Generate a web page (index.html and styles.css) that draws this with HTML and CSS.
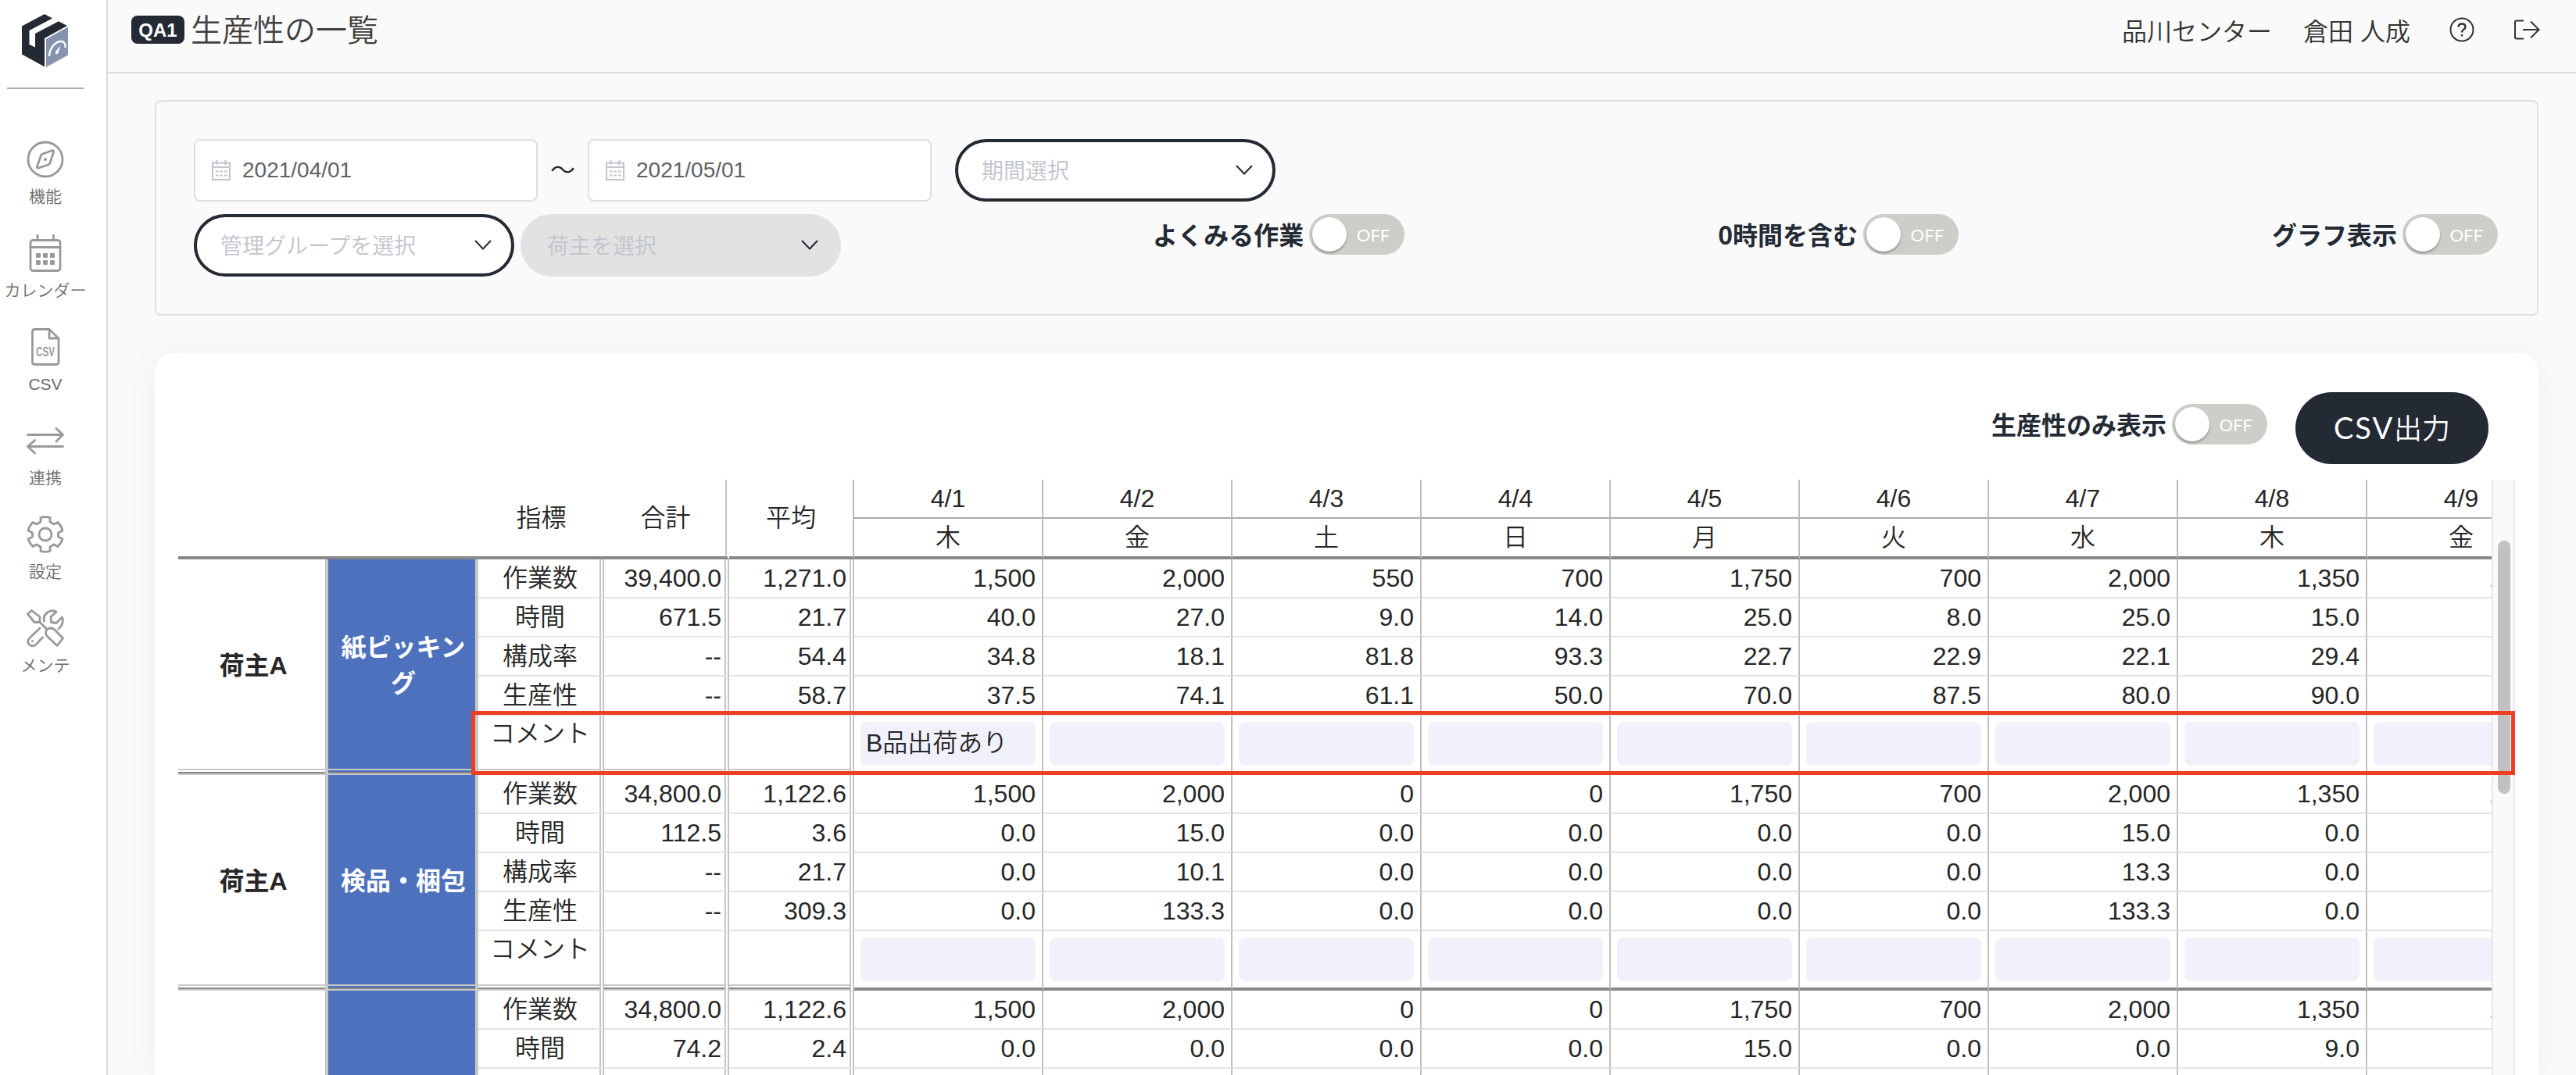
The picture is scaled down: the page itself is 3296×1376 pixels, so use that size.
FILE: index.html
```
<!DOCTYPE html>
<html lang="ja">
<head>
    <meta charset="UTF-8">
    <meta name="viewport" content="width=device-width, initial-scale=1.0">
    <title>生産性の一覧</title>
    <link rel="stylesheet" href="styles.css">
</head>
<body>
    <nav class="sidebar">
        <svg class="logo" viewBox="28 17 62 70">
            <path fill="#232a34" d="M58 18L68 23.5L38.5 39V57L46 60.5V43L76 27.3L87 33L58 49V85.5L29 69.5V33.5Z"/>
            <path fill="#8593ae" d="M60 50L88 34.5V70.5L60 86Z"/>
            <path fill="none" stroke="#fff" stroke-width="2.4" stroke-linecap="round" d="M64 71C65 61 72 53 79 53C83 53 85 56 84.5 60"/>
            <path fill="#fff" d="M78.5 58L75.5 68Q73.5 70.500 72 68.500Q71.500 66.500 73 65Z"/>
        </svg>
        <hr>
        <a class="nav-item">
            <svg viewBox="0 0 48 48"><circle cx="24" cy="24" r="22"/><path d="M32.500 12.800L20.500 17Q18.800 17.600 18.300 19.200L13.500 33Q12.800 35.800 15.500 35L27.500 31Q29.200 30.400 29.800 28.800L34.500 14.800Q35.200 12 32.500 12.800Z"/><circle class="fill" cx="24" cy="24" r="2"/></svg>
            <span>機能</span>
        </a>
        <a class="nav-item">
            <svg viewBox="0 0 48 48"><rect x="5" y="7.500" width="38" height="39" rx="3"/><path d="M5 16.500H43M14 1V7M34.500 1V7"/><g class="fill"><rect x="12" y="24" width="6" height="6" rx="1"/><rect x="21" y="24" width="6" height="6" rx="1"/><rect x="30" y="24" width="6" height="6" rx="1"/><rect x="12" y="33" width="6" height="6" rx="1"/><rect x="21" y="33" width="6" height="6" rx="1"/><rect x="30" y="33" width="6" height="6" rx="1"/></g></svg>
            <span>カレンダー</span>
        </a>
        <a class="nav-item">
            <svg viewBox="0 0 48 48"><path d="M29 1.500H10.500Q7.500 1.500 7.500 4.500V43.500Q7.500 46.500 10.500 46.500H38Q41 46.500 41 43.500V13L29 1.500V13H41"/><text x="12" y="36" textLength="24" lengthAdjust="spacingAndGlyphs">CSV</text></svg>
            <span>CSV</span>
        </a>
        <a class="nav-item">
            <svg viewBox="0 0 48 48"><path d="M1.500 16.500H46.500M38 8.500L46.500 16.500L38 25M46.500 31.500H1.500M10.500 23.500L1.500 31.500L10.500 40"/></svg>
            <span>連携</span>
        </a>
        <a class="nav-item">
            <svg viewBox="0 0 48 48"><path d="M18 2.500Q24 .8 30 2.500V8L35 11L40 8.500Q44.500 13 46 19L40.500 22V27L46 30Q44.500 35 40 39.500L35 37L30 40V45.500Q24 47.200 18 45.500V40L13 37L8 39.500Q3.500 35 2 30L7.500 27V22L2 19Q3.500 13 8 8.500L13 11L18 8Z"/><circle cx="24" cy="24" r="8"/></svg>
            <span>設定</span>
        </a>
        <a class="nav-item">
            <svg viewBox="0 0 48 48"><path d="M1.500 6L6.500 1.500L17 9.500V16.500H10ZM17 16.500L26 25.500M26 26Q31 22 36 26L46.500 37L39 46.500L26 34Q23 30 26 26ZM17 24L3.500 37Q0 41.500 3.500 45Q7.500 48.500 12 45L20.500 36M22.500 15Q21 8 26.500 4Q32 0 38 3L31 9.500L31.500 16.500L38 17.500L45.500 10Q48.500 18 41 25"/><circle class="fill" cx="7.500" cy="40.500" r="1.500"/></svg>
            <span>メンテ</span>
        </a>
    </nav>

    <div class="main">
        <header>
            <span class="badge">QA1</span>
            <h1>生産性の一覧</h1>
            <div class="account">
                <span>品川センター</span>
                <span>倉田 人成</span>
                <svg viewBox="0 0 32 32"><circle cx="16" cy="16" r="14.500"/><path d="M11.500 12.500Q12 8.500 16 8.500Q20.500 8.500 20.500 12.500Q20.500 14.500 18 16Q16 17.300 16 19.500M16 22V24.500" stroke-width="2.400"/></svg>
                <svg viewBox="0 0 34 32"><path d="M13 4.500H4Q2 4.500 2 6.500V25.500Q2 27.500 4 27.500H13M12 16H32M22 5.500L32.500 16L22 26.500"/></svg>
            </div>
        </header>

        <section class="filter">
            <div class="filter-row">
                <div class="date">
                    <svg viewBox="0 0 24 26"><path d="M1 3.500H23V25H1ZM1 9H23M6.500 0V6M17.500 0V6M5 14.500H8.500M10.500 14.500H14M16 14.500H19.500M5 19.500H8.500M10.500 19.500H14M16 19.500H19.500"/></svg>
                    2021/04/01
                </div>
                <span class="tilde">〜</span>
                <div class="date">
                    <svg viewBox="0 0 24 26"><path d="M1 3.500H23V25H1ZM1 9H23M6.500 0V6M17.500 0V6M5 14.500H8.500M10.500 14.500H14M16 14.500H19.500M5 19.500H8.500M10.500 19.500H14M16 19.500H19.500"/></svg>
                    2021/05/01
                </div>
                <div class="select period">期間選択<svg viewBox="0 0 22 13"><path d="M1 1L11 11.500L21 1"/></svg></div>
            </div>
            <div class="filter-row">
                <div class="select">管理グループを選択<svg viewBox="0 0 22 13"><path d="M1 1L11 11.500L21 1"/></svg></div>
                <div class="select disabled">荷主を選択<svg viewBox="0 0 22 13"><path d="M1 1L11 11.500L21 1"/></svg></div>
                <div class="switches">
                    <label class="switch"><b>よくみる作業</b><span class="toggle">OFF</span></label>
                    <label class="switch"><b>0時間を含む</b><span class="toggle">OFF</span></label>
                    <label class="switch"><b>グラフ表示</b><span class="toggle">OFF</span></label>
                </div>
            </div>
        </section>

        <section class="card">
            <div class="card-head">
                <label class="switch"><b>生産性のみ表示</b><span class="toggle">OFF</span></label>
                <button class="csv"><span>CSV</span>出力</button>
            </div>
            <div class="scroll">
                <div class="table-wrap">
                    <table>
                        <colgroup>
                            <col class="c-owner"><col class="c-work"><col class="c-label"><col class="c-sum"><col class="c-sum">
                            <col span="9" class="c-day">
                        </colgroup>
                        <thead id="thead"></thead>
                        <tbody id="tbody"></tbody>
                    </table>
                </div>
                <div class="track"><div class="thumb"></div></div>
            </div>
            <div class="highlight"></div>
        </section>
    </div>

    <script>
        const days = ['木', '金', '土', '日', '月', '火', '水', '木', '金'];
        const groups = [
            {
                owner: '荷主A', work: '紙ピッキング', comment: 'B品出荷あり',
                rows: [
                    ['作業数', '39,400.0', '1,271.0', '1,500', '2,000', '550', '700', '1,750', '700', '2,000', '1,350', '1,500'],
                    ['時間', '671.5', '21.7', '40.0', '27.0', '9.0', '14.0', '25.0', '8.0', '25.0', '15.0', ''],
                    ['構成率', '--', '54.4', '34.8', '18.1', '81.8', '93.3', '22.7', '22.9', '22.1', '29.4', ''],
                    ['生産性', '--', '58.7', '37.5', '74.1', '61.1', '50.0', '70.0', '87.5', '80.0', '90.0', '']
                ]
            },
            {
                owner: '荷主A', work: '検品・梱包', comment: '',
                rows: [
                    ['作業数', '34,800.0', '1,122.6', '1,500', '2,000', '0', '0', '1,750', '700', '2,000', '1,350', '1,500'],
                    ['時間', '112.5', '3.6', '0.0', '15.0', '0.0', '0.0', '0.0', '0.0', '15.0', '0.0', ''],
                    ['構成率', '--', '21.7', '0.0', '10.1', '0.0', '0.0', '0.0', '0.0', '13.3', '0.0', ''],
                    ['生産性', '--', '309.3', '0.0', '133.3', '0.0', '0.0', '0.0', '0.0', '133.3', '0.0', '']
                ]
            },
            {
                owner: '', work: '', comment: '',
                rows: [
                    ['作業数', '34,800.0', '1,122.6', '1,500', '2,000', '0', '0', '1,750', '700', '2,000', '1,350', '1,500'],
                    ['時間', '74.2', '2.4', '0.0', '0.0', '0.0', '0.0', '15.0', '0.0', '0.0', '9.0', ''],
                    ['', '', '', '', '', '', '', '', '', '', '', '']
                ]
            }
        ];

        let head = '<tr><th rowspan="2"></th><th rowspan="2"></th><th rowspan="2">指標</th>';
        head += '<th rowspan="2" class="total">合計</th><th rowspan="2" class="average">平均</th>';
        days.forEach((d, i) => { head += '<th class="day">4/' + (i + 1) + '</th>'; });
        head += '</tr><tr>';
        days.forEach(d => { head += '<th class="week">' + d + '</th>'; });
        document.getElementById('thead').innerHTML = head + '</tr>';

        let body = '';
        groups.forEach(g => {
            const span = g.rows.length + 1;
            g.rows.forEach((row, r) => {
                body += '<tr>';
                if (r === 0) {
                    body += '<td class="owner end" rowspan="' + span + '">' + g.owner + '</td>';
                    body += '<td class="work end" rowspan="' + span + '">' + g.work + '</td>';
                }
                row.forEach((v, i) => {
                    const cls = i === 0 ? 'label' : i < 3 ? 'sum' : 'num';
                    body += '<td class="' + cls + '">' + v + '</td>';
                });
                body += '</tr>';
            });
            body += '<tr class="comment"><td class="label end">' + (g.owner ? 'コメント' : '') + '</td><td class="sum end"></td><td class="sum end"></td>';
            days.forEach((d, i) => {
                body += '<td class="num"><div class="memo">' + (i === 0 ? g.comment : '') + '</div></td>';
            });
            body += '</tr>';
        });
        document.getElementById('tbody').innerHTML = body;
    </script>
</body>
</html>
```
FILE: styles.css
```
* {
    box-sizing: border-box;
}
body {
    margin: 0;
    display: flex;
    height: 1376px;
    overflow: hidden;
    font-family: "Liberation Sans", "Noto Sans CJK JP", sans-serif;
    font-size: 32px;
    font-weight: 350;
    color: #262626;
    background-color: #fafafa;
}
svg {
    fill: none;
    stroke: currentColor;
    stroke-width: 2;
    flex: none;
}

/* sidebar */
.sidebar {
    width: 138px;
    flex: none;
    padding-right: 20px;
    border-right: 2px solid #dcdcdc;
    background-color: #fff;
    display: flex;
    flex-direction: column;
    align-items: center;
}
.logo {
    width: 62px;
    height: 70px;
    margin-top: 17px;
    stroke: none;
}
.sidebar hr {
    width: 98px;
    height: 2px;
    margin: 25px 0 66px;
    border: none;
    background-color: #aaa;
}
.nav-item {
    height: 120px;
    display: flex;
    flex-direction: column;
    align-items: center;
    color: #999;
}
.nav-item svg {
    width: 48px;
    height: 48px;
    stroke-width: 2.8;
    stroke-linecap: round;
    stroke-linejoin: round;
}
.nav-item .fill {
    fill: #999;
    stroke: none;
}
.nav-item text {
    fill: #999;
    stroke: none;
    font-size: 16px;
    font-weight: bold;
}
.nav-item span {
    margin-top: 9px;
    font-size: 21px;
    line-height: 30px;
    color: #6b6b6b;
    white-space: nowrap;
}

/* header */
.main {
    flex: 1;
    min-width: 0;
}
header {
    height: 94px;
    padding: 0 46px 16px 30px;
    border-bottom: 2px solid #dcdcdc;
    display: flex;
    align-items: center;
}
.badge {
    width: 68px;
    height: 36px;
    border-radius: 8px;
    background-color: #232a34;
    color: #fff;
    font-size: 24px;
    font-weight: bold;
    line-height: 37px;
    text-align: center;
}
h1 {
    margin: 2px 0 0 8px;
    font-size: 40px;
    font-weight: 350;
    line-height: 60px;
    color: #404040;
}
.account {
    margin-left: auto;
    display: flex;
    align-items: center;
    color: #333;
}
.account span {
    margin-right: 40px;
}
.account svg {
    width: 32px;
    height: 32px;
    margin-left: 10px;
    margin-right: 40px;
}
.account svg:last-child {
    width: 34px;
    margin-right: 0;
}

/* filter */
.filter {
    height: 276px;
    margin: 34px 48px 48px 60px;
    padding: 48px 50px 0 48px;
    border: 2px solid #dee2e6;
    border-radius: 8px;
}
.filter-row {
    display: flex;
    margin-bottom: 16px;
}
.date {
    width: 440px;
    height: 80px;
    padding-left: 21px;
    border: 2px solid #dcdfe6;
    border-radius: 8px;
    background-color: #fff;
    display: flex;
    align-items: center;
    font-size: 28px;
    color: #606266;
}
.date svg {
    width: 24px;
    height: 26px;
    margin-right: 15px;
    color: #c0c4cc;
}
.tilde {
    width: 64px;
    line-height: 80px;
    text-align: center;
}
.select {
    width: 410px;
    height: 80px;
    padding: 0 25px 2px 30px;
    border: 4px solid #232a34;
    border-radius: 40px;
    background-color: #fff;
    display: flex;
    align-items: center;
    justify-content: space-between;
    font-size: 28px;
    color: #c0c4cc;
}
.select svg {
    width: 22px;
    height: 13px;
    color: #232a34;
}
.period {
    margin-left: 30px;
}
.disabled {
    margin-left: 8px;
    border-color: #e2e2e2;
    background-color: #e2e2e2;
}
.switches {
    flex: 1;
    margin-left: 399px;
    display: flex;
    justify-content: space-between;
}
.switch {
    height: 52px;
    display: flex;
    align-items: center;
    gap: 7px;
}
.switch b {
    padding-bottom: 3px;
    font-family: "Noto Sans CJK JP", sans-serif;
    color: #232a34;
}
.toggle {
    width: 122px;
    height: 52px;
    padding: 4px 19px 4px 4px;
    border-radius: 26px;
    background-color: #cdcec8;
    display: flex;
    align-items: center;
    justify-content: space-between;
    font-family: Lato, sans-serif;
    font-size: 22px;
    font-weight: 400;
    color: #fff;
}
.toggle::before {
    content: "";
    width: 44px;
    height: 44px;
    border-radius: 50%;
    background-color: #fff;
    box-shadow: 0 2px 3px rgba(0, 0, 0, 0.3);
}

/* table card */
.card {
    position: relative;
    height: 924px;
    margin: 0 48px 0 60px;
    padding: 50px 30px 0;
    border-radius: 24px 24px 0 0;
    background-color: #fff;
    box-shadow: 0 4px 40px rgba(0, 0, 0, 0.05);
}
.card-head {
    display: flex;
    justify-content: flex-end;
    padding-right: 34px;
    height: 112px;
}
.card-head .switch {
    margin-top: 15px;
}
.csv {
    width: 247px;
    height: 92px;
    margin-left: 36px;
    padding: 0 0 5px;
    border: none;
    border-radius: 46px;
    background-color: #232a34;
    color: #fff;
    font-family: Lato, "Noto Sans CJK JP", sans-serif;
    font-size: 36px;
    font-weight: 350;
}
.csv span {
    font-size: 38px;
    font-weight: 400;
    letter-spacing: 2px;
}
.scroll {
    display: flex;
    height: 762px;
}
.table-wrap {
    width: 2960px;
    overflow: hidden;
}
.track {
    width: 30px;
    padding: 78px 6px 0;
    border-left: 2px solid #e8e8e8;
    border-right: 2px solid #ededed;
    background-color: #fafafa;
}
.thumb {
    width: 16px;
    height: 324px;
    border-radius: 8px;
    background-color: #c1c1c1;
}
table {
    width: 3043px;
    table-layout: fixed;
    border-collapse: separate;
    border-spacing: 0;
}
.c-owner, .c-work {
    width: 192px;
}
.c-label {
    width: 161px;
}
.c-sum {
    width: 160px;
}
.c-day {
    width: 242px;
}
th, td {
    padding: 0;
    line-height: 46px;
    font-weight: 350;
}
th {
    height: 50px;
    border-bottom: 4px solid #888;
}
th.total {
    border-right: 3px solid #fff;
    box-shadow: inset -2px 0 #c4c4c4;
}
th.average, th.day, th.week {
    border-right: 2px solid #bebebe;
}
th.day {
    border-bottom: 2px solid #aaa;
}
th.week {
    height: 52px;
}
td {
    height: 50px;
    border-bottom: 2px solid #e4e4e4;
}
td.owner, td.work {
    border-right: 4px solid #c8c8c8;
    border-bottom: none;
    font-weight: bold;
    text-align: center;
    vertical-align: middle;
}
td.owner {
    padding-top: 4px;
    padding-left: 4px;
}
td.work {
    padding: 4px 8px 0 12px;
    background-color: #4d71bd;
    color: #fff;
}
td.label {
    padding-left: 3px;
    border-right: 6px double #c4c4c4;
    text-align: center;
}
td.sum {
    padding-right: 4px;
    border-right: 6px double #c4c4c4;
    text-align: right;
}
td.num {
    padding: 0 8px;
    border-right: 2px solid #c0c0c0;
    text-align: right;
}
td.num:last-child {
    padding-right: 4px;
}
.comment td {
    height: 76px;
    border-bottom: 4px solid #888;
    vertical-align: top;
}
td.end, .comment td.end {
    padding-bottom: 8px;
    border-bottom: none;
    background-image: linear-gradient(#c8c8c8 2px, transparent 2px 4px, #888 4px 6px, #c8c8c8 6px);
    background-position: left bottom;
    background-size: 100% 8px;
    background-repeat: no-repeat;
}
.memo {
    height: 56px;
    margin-top: 8px;
    padding-left: 7px;
    border-radius: 8px;
    background-color: #f1f1fb;
    line-height: 54px;
    text-align: left;
}
.highlight {
    position: absolute;
    left: 405px;
    top: 458px;
    width: 2615px;
    height: 82px;
    border: 5px solid #ee3f24;
}
```
